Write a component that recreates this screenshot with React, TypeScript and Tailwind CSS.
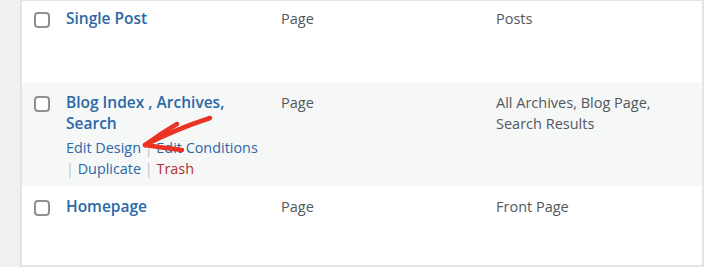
import React from "react"

const font = { fontFamily: '"Open Sans", "Noto Sans", sans-serif' }

function Checkbox() {
  return <div className="mt-[1px] h-4 w-4 rounded-[4px] border-2 border-[#8c8f94] bg-white" />
}

type Row = {
  title: string[]
  type: string
  location: string[]
  actions?: boolean
  alt?: boolean
  className: string
}

const rows: Row[] = [
  { title: ["Single Post"], type: "Page", location: ["Posts"], className: "h-[81px] pt-[7px]" },
  {
    title: ["Blog Index , Archives,", "Search"],
    type: "Page",
    location: ["All Archives, Blog Page,", "Search Results"],
    actions: true,
    alt: true,
    className: "h-[104px] pt-[10px]",
  },
  { title: ["Homepage"], type: "Page", location: ["Front Page"], className: "h-[79px] pt-[10px]" },
]

export default function App() {
  return (
    <div className="flex h-[267px] w-[704px] overflow-hidden bg-[#f0f0f1]" style={font}>
      <div className="w-[20px] shrink-0" />
      <div className="relative flex w-[684px] flex-col border-x-2 border-b-2 border-t border-[#e2e4e7] bg-white">
        {rows.map((r, i) => (
          <div
            key={i}
            className={`grid grid-cols-[44px_215px_215px_1fr] ${r.alt ? "bg-[#f6f7f7]" : "bg-white"} ${r.className}`}
          >
            <div className="flex justify-start pl-[12px] pt-[3px]">
              <Checkbox />
            </div>
            <div>
              {r.title.map((t) => (
                <div key={t} className="text-[15.5px] font-semibold leading-[21px] text-[#2a68a6]">
                  {t}
                </div>
              ))}
              {r.actions && (
                <div className="text-[14.4px] leading-[21px] text-[#2a68a6]">
                  <div className="mt-[3px]">
                    Edit Design <span className="text-[#c3c4c7]">|</span> Edit Conditions
                  </div>
                  <div>
                    <span className="text-[#c3c4c7]">|</span> Duplicate{" "}
                    <span className="text-[#c3c4c7]">|</span> <span className="text-[#b32d2e]">Trash</span>
                  </div>
                </div>
              )}
            </div>
            <div className="text-[14.5px] font-medium leading-[21px] text-[#50575e]">{r.type}</div>
            <div className="text-[14.5px] font-medium leading-[21px] text-[#50575e]">
              {r.location.map((l) => (
                <div key={l}>{l}</div>
              ))}
            </div>
          </div>
        ))}
        <svg
          className="pointer-events-none absolute left-[-22px] top-[-1px]"
          width="704"
          height="267"
          viewBox="0 0 704 267"
        >
          <g stroke="#ea3323" strokeWidth="4.5" strokeLinecap="round" strokeLinejoin="round" fill="none">
            <path d="M210 118 Q176 129 145 145" />
            <path d="M177 124 Q160 134 145 145" />
            <path d="M145 145 Q164 148 182 150" />
          </g>
        </svg>
      </div>
    </div>
  )
}
